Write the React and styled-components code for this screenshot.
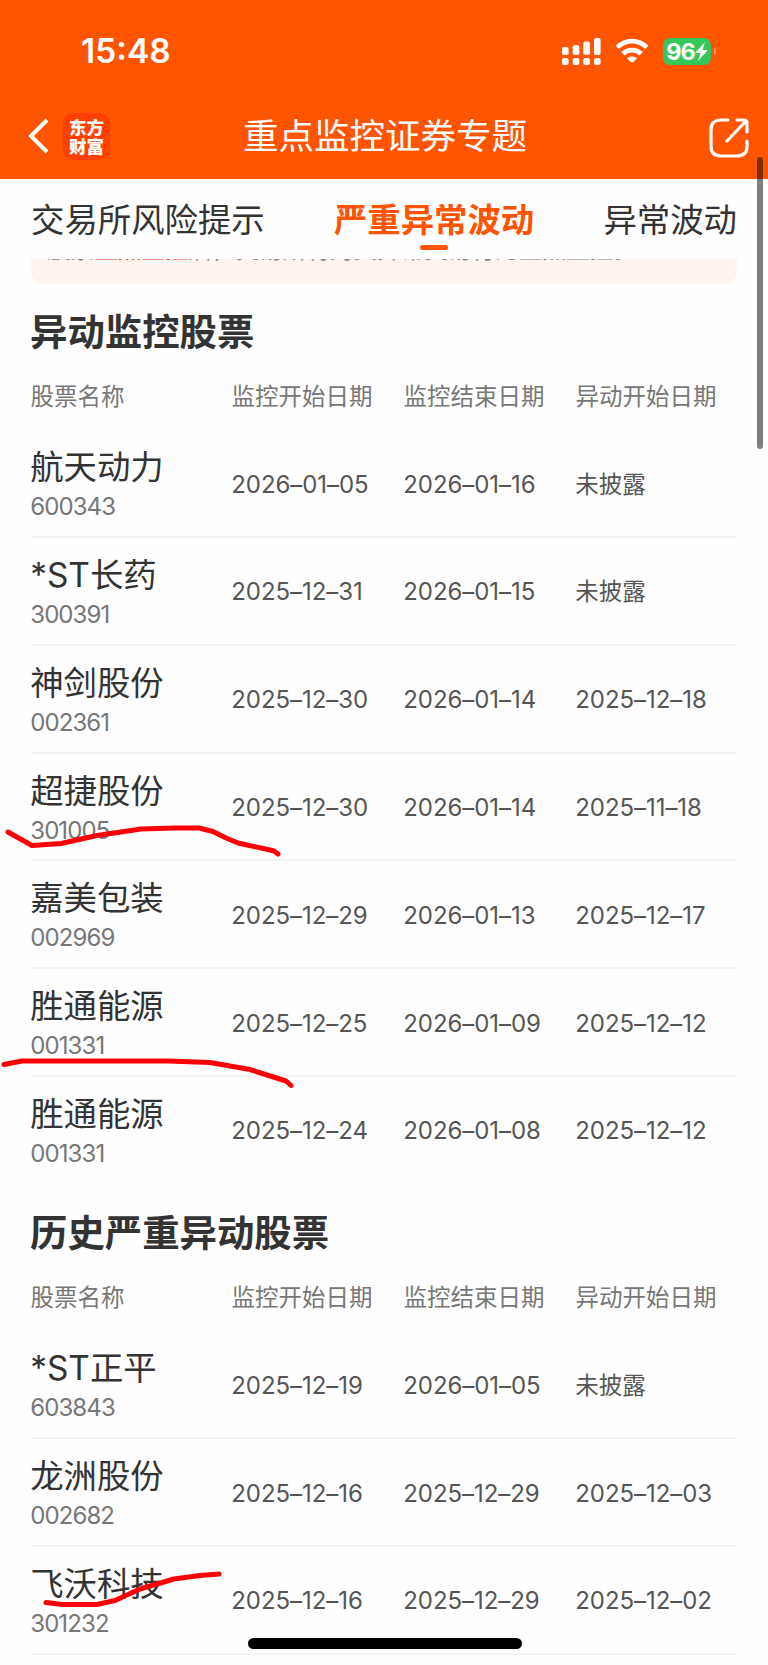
import React from 'react';
import styled, { createGlobalStyle } from 'styled-components';

const GlobalStyle = createGlobalStyle`
  * {
    box-sizing: border-box;
  }
  body {
    margin: 0;
    background: #fefefe;
    font-family: Inter, 'Noto Sans CJK SC', sans-serif;
    color: #333;
  }
`;

const Screen = styled.div`
  position: relative;
  width: 768px;
  height: 1665px;
  overflow: hidden;
  display: flex;
  flex-direction: column;
`;

const Header = styled.header`
  height: 179px;
  flex: none;
  background: #ff5500;
  color: #fff;
`;

const StatusBar = styled.div`
  height: 102px;
  padding: 0 52px 0 81px;
  display: flex;
  align-items: center;
  justify-content: space-between;
`;

const Clock = styled.div`
  font-size: 33.5px;
  font-weight: 600;
  line-height: 40px;
`;

const StatusIcons = styled.div`
  display: flex;
  align-items: center;
  gap: 14px;
`;

const Battery = styled.div`
  display: flex;
  align-items: center;
  gap: 3px;
`;

const BatteryBody = styled.div`
  display: flex;
  align-items: center;
  justify-content: center;
  width: 48px;
  height: 27px;
  border-radius: 7px;
  background: #34c759;
  font-size: 23.5px;
  font-weight: 700;
  line-height: 27px;
  letter-spacing: -1px;

  svg {
    flex: none;
  }
`;

const BatteryTip = styled.div`
  width: 2px;
  height: 8px;
  border-radius: 0 2px 2px 0;
  background: #ff9560;
`;

const NavBar = styled.div`
  height: 68px;
  padding: 0 19px 0 28px;
  display: grid;
  grid-template-columns: 196px 1fr 203px;
  align-items: center;
`;

const NavLeft = styled.div`
  display: flex;
  align-items: center;
  gap: 14px;
`;

const Logo = styled.div`
  width: 47px;
  height: 47px;
  padding-top: 4px;
  border-radius: 10px;
  background: #ff4000;
  font-family: 'Noto Sans CJK SC', sans-serif;
  font-size: 17.5px;
  font-weight: 900;
  line-height: 19.5px;
  text-align: center;
`;

const NavTitle = styled.h1`
  margin: 0;
  padding-top: 1px;
  font-size: 35.5px;
  font-weight: 400;
  line-height: 50px;
  text-align: center;
  white-space: nowrap;
`;

const NavRight = styled.div`
  display: flex;
  justify-content: flex-end;
  padding-top: 3px;
`;

const Tabs = styled.nav`
  height: 80px;
  flex: none;
  padding: 16px 31px 0;
  display: flex;
  justify-content: space-between;
`;

const Tab = styled.div`
  display: flex;
  flex-direction: column;
  align-items: center;
  font-size: 33.4px;
  line-height: 50px;
  white-space: nowrap;
  font-weight: ${({ active }) => (active ? 700 : 400)};
  color: ${({ active }) => (active ? '#ff5500' : '#333')};
`;

const TabLine = styled.div`
  width: 28px;
  height: 5px;
  border-radius: 3px;
  background: #ff5500;
`;

const Notice = styled.div`
  height: 25px;
  flex: none;
  margin: 0 31px;
  padding: 0 16px;
  display: flex;
  align-items: flex-start;
  overflow: hidden;
  border-radius: 0 0 13px 13px;
  background: #fff4ef;
`;

const NoticeText = styled.div`
  margin-top: -26px;
  font-size: 23.6px;
  line-height: 34px;
  white-space: nowrap;
  color: #888;
`;

const Highlight = styled.span`
  color: #f04040;
`;

const Section = styled.section`
  flex: none;
  padding: 0 31px;
`;

const SectionTitle = styled.h2`
  margin: 0;
  padding-top: ${({ gap }) => gap}px;
  font-size: 37.4px;
  font-weight: 700;
  line-height: 50px;
  text-indent: -1px;
`;

const TableRow = styled.div`
  display: grid;
  grid-template-columns: 201px 172px 172px 1fr;
  align-items: center;
  white-space: nowrap;
`;

const HeadRow = styled(TableRow)`
  height: 72.5px;
  padding-top: 1.5px;
  font-size: 23.5px;
  text-indent: -0.4px;
  color: #777;
`;

const StockRow = styled(TableRow)`
  height: 107.8px;
  border-bottom: 2px solid #f2f2f2;
  font-size: 24px;
  text-indent: -0.8px;
  color: #555;

  &:last-child {
    border-bottom-color: ${({ closed }) => (closed ? 'transparent' : '#f2f2f2')};
  }
`;

const DateCell = styled.div`
  padding-top: 3px;
  font-size: ${({ pending }) => (pending ? 23.5 : 24)}px;
  line-height: 34px;
  letter-spacing: ${({ pending }) => (pending ? 0 : -0.05)}px;
`;

const StockName = styled.div`
  font-size: 33.4px;
  line-height: 44px;
  color: #333;
`;

const StockCode = styled.div`
  margin-bottom: -2px;
  padding-top: 2px;
  font-size: 24px;
  line-height: 32px;
  letter-spacing: -0.9px;
  color: #777;
`;

const HomeIndicator = styled.div`
  position: absolute;
  left: 248px;
  top: 1638px;
  width: 274px;
  height: 11px;
  border-radius: 6px;
  background: #000;
`;

const ScrollThumb = styled.div`
  position: absolute;
  left: 757px;
  top: 157px;
  width: 6px;
  height: 292px;
  border-radius: 3px;
  background: rgba(0, 0, 0, 0.5);
`;

const Marks = styled.svg`
  position: absolute;
  left: 0;
  top: 0;
`;

const monitored = [
  ['航天动力', '600343', '2026–01–05', '2026–01–16', null],
  ['*ST长药', '300391', '2025–12–31', '2026–01–15', null],
  ['神剑股份', '002361', '2025–12–30', '2026–01–14', '2025–12–18'],
  ['超捷股份', '301005', '2025–12–30', '2026–01–14', '2025–11–18'],
  ['嘉美包装', '002969', '2025–12–29', '2026–01–13', '2025–12–17'],
  ['胜通能源', '001331', '2025–12–25', '2026–01–09', '2025–12–12'],
  ['胜通能源', '001331', '2025–12–24', '2026–01–08', '2025–12–12'],
];

const history = [
  ['*ST正平', '603843', '2025–12–19', '2026–01–05', null],
  ['龙洲股份', '002682', '2025–12–16', '2025–12–29', '2025–12–03'],
  ['飞沃科技', '301232', '2025–12–16', '2025–12–29', '2025–12–02'],
];

function SignalIcon() {
  const bars = [[0, 9, 8], [10.7, 7, 10], [21.3, 3.5, 13.5], [32, 0, 17]];
  return (
    <svg width="39" height="27" viewBox="0 0 39 27" fill="#fff">
      {bars.map(([x, y, h]) => (
        <g key={x}>
          <rect x={x} y={y} width="6.6" height={h} rx="2" />
          <rect x={x} y="20" width="6.6" height="7" rx="2" />
        </g>
      ))}
    </svg>
  );
}

function WifiIcon() {
  return (
    <svg width="34" height="26" viewBox="0 0 34 26" fill="none" stroke="#fff" strokeWidth="4.8">
      <path d="M2.2 9.4C10.5 1 23.5 1 31.8 9.4" />
      <path d="M7.8 15.8C13 10.9 21 10.9 26.2 15.8" />
      <path d="M17 25L12 20.4C14.8 17.8 19.2 17.8 22 20.4Z" fill="#fff" stroke="none" />
    </svg>
  );
}

function BoltIcon() {
  return (
    <svg width="13" height="19" viewBox="0 0 13 19" fill="#fff">
      <path d="M10 0L0 11H5.5L3 19L13 8H7.5Z" />
    </svg>
  );
}

function BackIcon() {
  return (
    <svg width="21" height="36" viewBox="0 0 21 36" fill="none" stroke="#fff" strokeWidth="4">
      <path d="M19 2L3 18L19 34" />
    </svg>
  );
}

function ShareIcon() {
  return (
    <svg width="40" height="40" viewBox="0 0 40 40" fill="none" stroke="#fff" strokeWidth="3.2" strokeLinecap="round" strokeLinejoin="round">
      <path d="M19 2H12Q2 2 2 12V28Q2 38 12 38H28Q38 38 38 28V23" />
      <path d="M18 23L37 3M28 2H35Q38 2 38 5V14" />
    </svg>
  );
}

function StockTable({ title, rows, gap, closed }) {
  return (
    <Section>
      <SectionTitle gap={gap}>{title}</SectionTitle>
      <HeadRow>
        <div>股票名称</div>
        <div>监控开始日期</div>
        <div>监控结束日期</div>
        <div>异动开始日期</div>
      </HeadRow>
      <div>
        {rows.map(([name, code, start, end, moved], i) => (
          <StockRow key={i} closed={closed}>
            <div>
              <StockName>{name}</StockName>
              <StockCode>{code}</StockCode>
            </div>
            <DateCell>{start}</DateCell>
            <DateCell>{end}</DateCell>
            <DateCell pending={!moved}>{moved || '未披露'}</DateCell>
          </StockRow>
        ))}
      </div>
    </Section>
  );
}

export default function App() {
  return (
    <Screen>
      <GlobalStyle />
      <Header>
        <StatusBar>
          <Clock>15:48</Clock>
          <StatusIcons>
            <SignalIcon />
            <WifiIcon />
            <Battery>
              <BatteryBody>96<BoltIcon /></BatteryBody>
              <BatteryTip />
            </Battery>
          </StatusIcons>
        </StatusBar>
        <NavBar>
          <NavLeft>
            <BackIcon />
            <Logo>东方<br />财富</Logo>
          </NavLeft>
          <NavTitle>重点监控证券专题</NavTitle>
          <NavRight>
            <ShareIcon />
          </NavRight>
        </NavBar>
      </Header>
      <Tabs>
        <Tab>交易所风险提示</Tab>
        <Tab active>严重异常波动<TabLine /></Tab>
        <Tab>异常波动</Tab>
      </Tabs>
      <Notice>
        <NoticeText>
          股票<Highlight>重点监控</Highlight>后，交易所将对其异常交易行为重点监控。
        </NoticeText>
      </Notice>
      <StockTable title="异动监控股票" rows={monitored} gap={23.8} closed />
      <StockTable title="历史严重异动股票" rows={history} gap={24} />
      <ScrollThumb />
      <HomeIndicator />
      <Marks width="768" height="1665" fill="none" stroke="#fb0007" strokeWidth="5" strokeLinecap="round" strokeLinejoin="round">
        <path d="M8 832L32 845.5L61 843.5L97 835.5L141 829L175 828H199L213 831.5L226 838L238 843L270 850L274 851L278 854" />
        <path d="M4 1064.5L22 1061H168L210 1062.5L250 1069.5L286 1081L291 1085.5" />
        <path d="M46 1602.5L62 1604.5H97L115 1600.5L140 1589L174 1579L200 1575.5L219 1574" />
      </Marks>
    </Screen>
  );
}
